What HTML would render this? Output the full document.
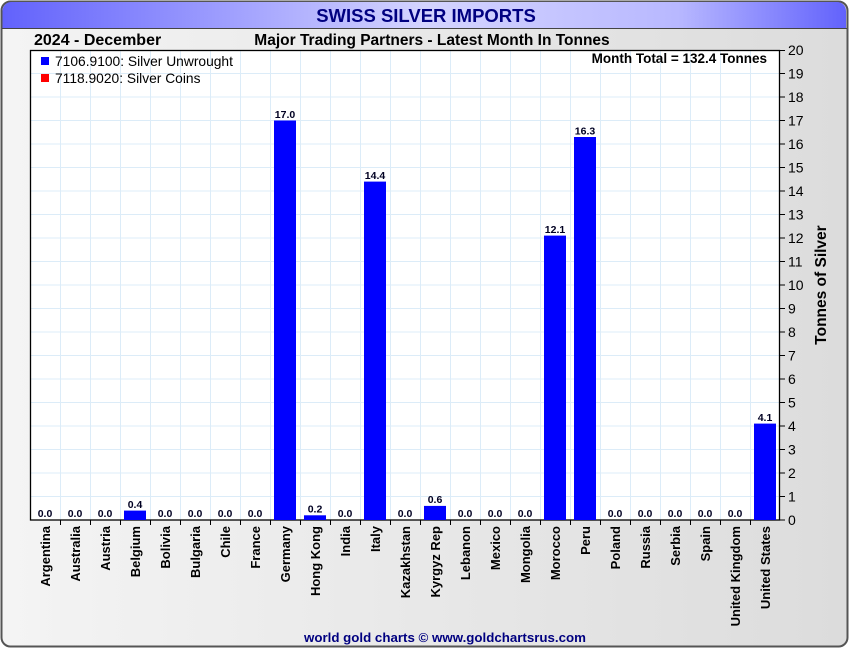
<!DOCTYPE html>
<html><head><meta charset="utf-8"><style>
body{margin:0;width:850px;height:650px;overflow:hidden;background:#fff;font-family:"Liberation Sans",sans-serif}
</style></head><body>
<svg width="850" height="650" xmlns="http://www.w3.org/2000/svg" font-family="Liberation Sans, sans-serif">
<defs>
<linearGradient id="tb" x1="0" x2="1" y1="0" y2="0"><stop offset="0" stop-color="#6262fc"/><stop offset="0.5" stop-color="#d4d4ff"/><stop offset="0.8" stop-color="#b8b8ff"/><stop offset="1" stop-color="#6262fc"/></linearGradient>
<linearGradient id="bg" x1="0" x2="1" y1="0" y2="0"><stop offset="0" stop-color="#f4f4f4"/><stop offset="1" stop-color="#dcdcdc"/></linearGradient>
</defs>
<rect x="1.5" y="1.5" width="846" height="645" rx="9" fill="url(#bg)" stroke="#555" stroke-width="2"/>
<path d="M2.5 28 V11 a9 9 0 0 1 9 -9 H837 a9 9 0 0 1 9 9 V28 Z" fill="url(#tb)"/>
<line x1="2" y1="28.5" x2="847" y2="28.5" stroke="#444" stroke-width="1"/>
<text x="426" y="22" text-anchor="middle" font-size="18.5" font-weight="bold" fill="#000080">SWISS SILVER IMPORTS</text>
<text x="34" y="45" font-size="16" font-weight="bold">2024 - December</text>
<text x="432" y="45" text-anchor="middle" font-size="15.5" font-weight="bold">Major Trading Partners - Latest Month In Tonnes</text>
<rect x="30" y="50" width="750" height="470" fill="#fff"/>
<g stroke="#dcecf8" stroke-width="1">
<path d="M60.5 50V520M90.5 50V520M120.5 50V520M150.5 50V520M180.5 50V520M210.5 50V520M240.5 50V520M270.5 50V520M300.5 50V520M330.5 50V520M360.5 50V520M390.5 50V520M420.5 50V520M450.5 50V520M480.5 50V520M510.5 50V520M540.5 50V520M570.5 50V520M600.5 50V520M630.5 50V520M660.5 50V520M690.5 50V520M720.5 50V520M750.5 50V520"/>
<path d="M30 496.5H780M30 473H780M30 449.5H780M30 426H780M30 402.5H780M30 379H780M30 355.5H780M30 332H780M30 308.5H780M30 285H780M30 261.5H780M30 238H780M30 214.5H780M30 191H780M30 167.5H780M30 144H780M30 120.5H780M30 97H780M30 73.5H780"/>
</g>
<rect x="30.5" y="50.5" width="749" height="469.5" fill="none" stroke="#000" stroke-width="1.3"/>
<rect x="41" y="57" width="8" height="8" fill="#0000ff"/>
<text x="55" y="66" font-size="13.8">7106.9100: Silver Unwrought</text>
<rect x="41" y="74" width="8" height="8" fill="#ff0000"/>
<text x="55" y="83" font-size="13.8">7118.9020: Silver Coins</text>
<text x="767" y="63" text-anchor="end" font-size="13.5" font-weight="bold">Month Total = 132.4 Tonnes</text>
<g fill="#0000ff">
<rect x="124" y="510.6" width="22" height="9.4"/>
<rect x="274" y="120.5" width="22" height="399.5"/>
<rect x="304" y="515.3" width="22" height="4.7"/>
<rect x="364" y="181.6" width="22" height="338.4"/>
<rect x="424" y="505.9" width="22" height="14.1"/>
<rect x="544" y="235.6" width="22" height="284.4"/>
<rect x="574" y="137" width="22" height="383"/>
<rect x="754" y="423.6" width="22" height="96.4"/>
</g>
<g font-size="10.5" font-weight="bold" text-anchor="middle" fill="#000022">
<text x="45" y="517">0.0</text><text x="75" y="517">0.0</text><text x="105" y="517">0.0</text><text x="135" y="508">0.4</text><text x="165" y="517">0.0</text><text x="195" y="517">0.0</text><text x="225" y="517">0.0</text><text x="255" y="517">0.0</text><text x="285" y="118">17.0</text><text x="315" y="512.5">0.2</text><text x="345" y="517">0.0</text><text x="375" y="179">14.4</text><text x="405" y="517">0.0</text><text x="435" y="503">0.6</text><text x="465" y="517">0.0</text><text x="495" y="517">0.0</text><text x="525" y="517">0.0</text><text x="555" y="233">12.1</text><text x="585" y="134.5">16.3</text><text x="615" y="517">0.0</text><text x="645" y="517">0.0</text><text x="675" y="517">0.0</text><text x="705" y="517">0.0</text><text x="735" y="517">0.0</text><text x="765" y="421">4.1</text>
</g>
<path stroke="#000" stroke-width="1" d="M60.5 520V525M90.5 520V525M120.5 520V525M150.5 520V525M180.5 520V525M210.5 520V525M240.5 520V525M270.5 520V525M300.5 520V525M330.5 520V525M360.5 520V525M390.5 520V525M420.5 520V525M450.5 520V525M480.5 520V525M510.5 520V525M540.5 520V525M570.5 520V525M600.5 520V525M630.5 520V525M660.5 520V525M690.5 520V525M720.5 520V525M750.5 520V525"/>
<path stroke="#000" stroke-width="1" d="M780 520H785M780 496.5H785M780 473H785M780 449.5H785M780 426H785M780 402.5H785M780 379H785M780 355.5H785M780 332H785M780 308.5H785M780 285H785M780 261.5H785M780 238H785M780 214.5H785M780 191H785M780 167.5H785M780 144H785M780 120.5H785M780 97H785M780 73.5H785M780 50.5H785"/>
<g font-size="14" fill="#000">
<text x="788" y="525">0</text><text x="788" y="501.5">1</text><text x="788" y="478">2</text><text x="788" y="454.5">3</text><text x="788" y="431">4</text><text x="788" y="407.5">5</text><text x="788" y="384">6</text><text x="788" y="360.5">7</text><text x="788" y="337">8</text><text x="788" y="313.5">9</text><text x="788" y="290">10</text><text x="788" y="266.5">11</text><text x="788" y="243">12</text><text x="788" y="219.5">13</text><text x="788" y="196">14</text><text x="788" y="172.5">15</text><text x="788" y="149">16</text><text x="788" y="125.5">17</text><text x="788" y="102">18</text><text x="788" y="78.5">19</text><text x="788" y="55">20</text>
</g>
<text transform="translate(826,285) rotate(-90)" text-anchor="middle" font-size="15.5" font-weight="bold">Tonnes of Silver</text>
<g font-size="13" font-weight="bold" text-anchor="end">
<text transform="translate(50,526) rotate(-90)">Argentina</text>
<text transform="translate(80,526) rotate(-90)">Australia</text>
<text transform="translate(110,526) rotate(-90)">Austria</text>
<text transform="translate(140,526) rotate(-90)">Belgium</text>
<text transform="translate(170,526) rotate(-90)">Bolivia</text>
<text transform="translate(200,526) rotate(-90)">Bulgaria</text>
<text transform="translate(230,526) rotate(-90)">Chile</text>
<text transform="translate(260,526) rotate(-90)">France</text>
<text transform="translate(290,526) rotate(-90)">Germany</text>
<text transform="translate(320,526) rotate(-90)">Hong Kong</text>
<text transform="translate(350,526) rotate(-90)">India</text>
<text transform="translate(380,526) rotate(-90)">Italy</text>
<text transform="translate(410,526) rotate(-90)">Kazakhstan</text>
<text transform="translate(440,526) rotate(-90)">Kyrgyz Rep</text>
<text transform="translate(470,526) rotate(-90)">Lebanon</text>
<text transform="translate(500,526) rotate(-90)">Mexico</text>
<text transform="translate(530,526) rotate(-90)">Mongolia</text>
<text transform="translate(560,526) rotate(-90)">Morocco</text>
<text transform="translate(590,526) rotate(-90)">Peru</text>
<text transform="translate(620,526) rotate(-90)">Poland</text>
<text transform="translate(650,526) rotate(-90)">Russia</text>
<text transform="translate(680,526) rotate(-90)">Serbia</text>
<text transform="translate(710,526) rotate(-90)">Spain</text>
<text transform="translate(740,526) rotate(-90)">United Kingdom</text>
<text transform="translate(770,526) rotate(-90)">United States</text>
</g>
<text x="445" y="642" text-anchor="middle" font-size="13.3" font-weight="bold" fill="#000080">world gold charts © www.goldchartsrus.com</text>
</svg>
</body></html>
